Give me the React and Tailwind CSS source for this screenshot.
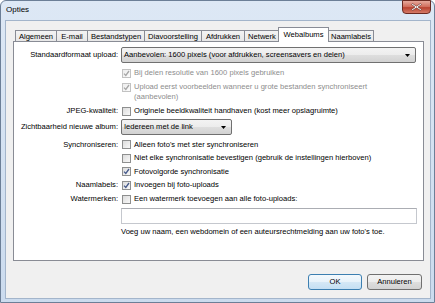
import React from "react";

function Check({ checked, disabled }) {
  return (
    <div
      className={
        "w-[9px] h-[9px] shrink-0 border flex items-center justify-center " +
        (disabled
          ? "border-[#c2c2c2] bg-[linear-gradient(135deg,#ededed,#fbfbfb)]"
          : "border-[#8e8f8f] bg-[linear-gradient(135deg,#dcdcdc,#f8f8f8)]")
      }
    >
      {checked && (
        <svg width="7" height="7" viewBox="0 0 7 7">
          <path
            d="M1 3.6 L2.8 5.5 L6 1"
            fill="none"
            stroke={disabled ? "#a6a6a6" : "#465a8b"}
            strokeWidth="1.3"
          />
        </svg>
      )}
    </div>
  );
}

function Arrow() {
  return (
    <svg width="5" height="3" viewBox="0 0 5 3">
      <path d="M0 0 H5 L2.5 3 Z" fill="#000" />
    </svg>
  );
}

const ddBg =
  "bg-[linear-gradient(to_bottom,#f3f3f3_0%,#ececec_50%,#dedede_51%,#d2d2d2_100%)]";

function Tab({ w, label, selected }) {
  return (
    <div
      className={
        "border border-b-0 border-[#898c95] flex justify-center leading-[10px] " +
        w +
        (selected
          ? " relative z-10 bg-white h-[15px] pt-[2px] -ml-[2px]"
          : " bg-[linear-gradient(to_bottom,#f3f3f3,#e6e6e6)] h-[12px] pt-[1px] -ml-[1px]")
      }
    >
      {label}
    </div>
  );
}

export default function App() {
  return (
    <div className="w-[435px] h-[303px] bg-white overflow-hidden font-['Liberation_Sans',Arial,sans-serif] text-[7.6px] text-black">
      <div className="w-[435px] h-[303px] rounded-t-[6px] border border-[#6c7f97] bg-[linear-gradient(to_bottom,#dde8f5,#cbdbee)] flex flex-col relative">
        {/* title bar */}
        <div className="h-[19px] flex items-center pl-[5px] text-[8px] leading-none pb-[2px]">
          Opties
        </div>
        <div className="absolute top-[-1px] right-[3px] w-[29px] h-[14px] rounded-b-[4px] border border-[#6b2a22] bg-[linear-gradient(to_bottom,#e6a99c,#cf6a59_50%,#b8412f_55%,#d57b68)] flex items-center justify-center">
          <svg width="11" height="8" viewBox="0 0 11 8">
            <path
              d="M1.5 0.5 L5.5 3.3 L9.5 0.5 L10.5 1.5 L7 4 L10.5 6.5 L9.5 7.5 L5.5 4.7 L1.5 7.5 L0.5 6.5 L4 4 L0.5 1.5 Z"
              fill="#fff"
              stroke="#5b2a22"
              strokeWidth="0.6"
            />
          </svg>
        </div>

        {/* client */}
        <div className="flex-1 ml-[4px] mr-[3px] mb-[3px] border border-[#a3b5cb] bg-[#f0f0f0] flex flex-col">
          {/* tabs */}
          <div className="mt-[6px] ml-[9px] h-[15px] flex items-end -mb-[1px]">
            <Tab w="w-[42px] !ml-0" label="Algemeen" />
            <Tab w="w-[32px]" label="E-mail" />
            <Tab w="w-[58px]" label="Bestandstypen" />
            <Tab w="w-[58px]" label="Diavoorstelling" />
            <Tab w="w-[44px]" label="Afdrukken" />
            <Tab w="w-[36px]" label="Netwerk" />
            <Tab w="w-[51px]" label="Webalbums" selected />
            <Tab w="w-[46px]" label="Naamlabels" />
          </div>

          {/* panel */}
          <div className="ml-[7px] w-[411px] h-[220px] border border-[#898c95] bg-white pt-[5px] flex flex-col leading-[10px]">
            {/* row 1 */}
            <div className="flex items-center h-[16px]">
              <div className="w-[104px] text-right">Standaardformaat upload:</div>
              <div
                className={
                  "ml-[3px] w-[295px] h-[16px] border border-[#707070] rounded-[2px] flex items-center pl-[2px] pr-[5px] " +
                  ddBg
                }
              >
                <span className="flex-1">
                  Aanbevolen: 1600 pixels (voor afdrukken, screensavers en delen)
                </span>
                <Arrow />
              </div>
            </div>
            {/* row 2 */}
            <div className="flex items-center h-[14px] mt-[3px]">
              <div className="w-[104px]" />
              <div className="ml-[4px] flex items-center gap-[3px] text-[#8d8d8d]">
                <Check checked disabled />
                <span>Bij delen resolutie van 1600 pixels gebruiken</span>
              </div>
            </div>
            {/* row 3 */}
            <div className="flex mt-[2px]">
              <div className="w-[104px]" />
              <div className="ml-[4px] flex items-start gap-[3px] text-[#8d8d8d]">
                <div className="pt-[1px]">
                  <Check checked disabled />
                </div>
                <span>
                  Upload eerst voorbeelden wanneer u grote bestanden synchroniseert
                  <br />
                  (aanbevolen)
                </span>
              </div>
            </div>
            {/* JPEG */}
            <div className="flex items-center h-[14px] mt-[2px]">
              <div className="w-[104px] text-right">JPEG-kwaliteit:</div>
              <div className="ml-[4px] flex items-center gap-[3px]">
                <Check />
                <span>Originele beeldkwaliteit handhaven (kost meer opslagruimte)</span>
              </div>
            </div>
            {/* dropdown 2 */}
            <div className="flex items-center h-[16px] mt-[1px]">
              <div className="w-[104px] text-right">Zichtbaarheid nieuwe album:</div>
              <div
                className={
                  "ml-[3px] w-[111px] h-[16px] border border-[#707070] rounded-[2px] flex items-center pl-[2px] pr-[5px] " +
                  ddBg
                }
              >
                <span className="flex-1">Iedereen met de link</span>
                <Arrow />
              </div>
            </div>
            {/* sync */}
            <div className="flex items-center h-[13px] mt-[3px]">
              <div className="w-[104px] text-right">Synchroniseren:</div>
              <div className="ml-[4px] flex items-center gap-[3px]">
                <Check />
                <span>Alleen foto's met ster synchroniseren</span>
              </div>
            </div>
            <div className="flex items-center h-[14px]">
              <div className="w-[104px]" />
              <div className="ml-[4px] flex items-center gap-[3px]">
                <Check />
                <span>Niet elke synchronisatie bevestigen (gebruik de instellingen hierboven)</span>
              </div>
            </div>
            <div className="flex items-center h-[13px]">
              <div className="w-[104px]" />
              <div className="ml-[4px] flex items-center gap-[3px]">
                <Check checked />
                <span>Fotovolgorde synchronisatie</span>
              </div>
            </div>
            <div className="flex items-center h-[14px]">
              <div className="w-[104px] text-right">Naamlabels:</div>
              <div className="ml-[4px] flex items-center gap-[3px]">
                <Check checked />
                <span>Invoegen bij foto-uploads</span>
              </div>
            </div>
            <div className="flex items-center h-[14px]">
              <div className="w-[104px] text-right">Watermerken:</div>
              <div className="ml-[4px] flex items-center gap-[3px]">
                <Check />
                <span>Een watermerk toevoegen aan alle foto-uploads:</span>
              </div>
            </div>
            <div className="flex items-center h-[16px] mt-[2px]">
              <div className="w-[104px]" />
              <div className="ml-[3px] w-[296px] h-[16px] border border-[#c5c8ce] border-t-[#abadb3] bg-white" />
            </div>
            <div className="flex items-center h-[12px] mt-[2px]">
              <div className="w-[104px]" />
              <div className="ml-[3px]">
                Voeg uw naam, een webdomein of een auteursrechtmelding aan uw foto's toe.
              </div>
            </div>
          </div>

          {/* buttons */}
          <div className="mt-[13px] flex justify-end gap-[5px] mr-[8px]">
            <div className="w-[54px] h-[16px] rounded-[3px] border border-[#3c7fb1] bg-[linear-gradient(to_bottom,#f4f9fd_0%,#e7f2fa_50%,#d5e8f6_51%,#c4dff3_100%)] flex items-center justify-center">
              OK
            </div>
            <div className="w-[55px] h-[16px] rounded-[3px] border border-[#707070] bg-[linear-gradient(to_bottom,#f3f3f3_0%,#ececec_50%,#dedede_51%,#d2d2d2_100%)] flex items-center justify-center">
              Annuleren
            </div>
          </div>
        </div>
      </div>
    </div>
  );
}
